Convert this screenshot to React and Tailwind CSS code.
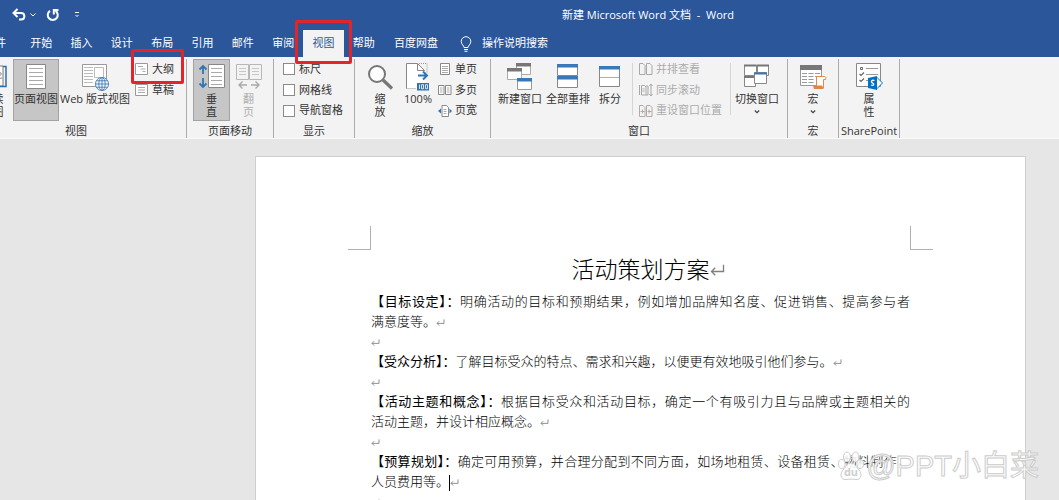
import React from 'react'

const tabs = ['开始', '插入', '设计', '布局', '引用', '邮件', '审阅', '视图', '帮助']

const paragraphs = [
  {
    heading: '【目标设定】：',
    lines: ['明确活动的目标和预期结果，例如增加品牌知名度、促进销售、提高参与者', '满意度等。'],
  },
  { heading: '【受众分析】：', lines: ['了解目标受众的特点、需求和兴趣，以便更有效地吸引他们参与。'] },
  {
    heading: '【活动主题和概念】：',
    lines: ['根据目标受众和活动目标，确定一个有吸引力且与品牌或主题相关的', '活动主题，并设计相应概念。'],
  },
  {
    heading: '【预算规划】：',
    lines: ['确定可用预算，并合理分配到不同方面，如场地租赁、设备租赁、物料制作，', '人员费用等。'],
    cursor: true,
  },
]

/* ---------- large icons, 28 x 28 ---------- */

const BigIcon = ({ children }) => (
  <svg width="28" height="28" viewBox="0 0 28 28" fill="none" className="shrink-0">
    {children}
  </svg>
)

const ReadIcon = () => (
  <BigIcon>
    <path d="M2 3h22v20H2z" fill="#fff" stroke="#777" />
    <path d="M24 3.5h3v20h-8" stroke="#2f6eb0" strokeWidth="1.5" />
    <path d="M19 9c4 0 4 3 1 4s-1 3 3 2M5 8h8M5 12h8M5 16h8" stroke="#777" />
  </BigIcon>
)

const PageIcon = () => (
  <BigIcon>
    <path d="M4.500 1.500h19v24h-19z" fill="#fff" stroke="#888" />
    <path d="M7 5.500h14M7 9.500h14M7 13.500h14M7 17.500h14M7 21.500h14" stroke="#aaa" />
  </BigIcon>
)

const WebIcon = () => (
  <BigIcon>
    <path d="M1.500 1.500h24v22h-24z" fill="#fff" stroke="#999" />
    <path d="M3 4.500h9M3 7.500h9M3 10.500h9M3 13.500h9M3 16.500h9M3 19.500h9" stroke="#bbb" />
    <path d="M13.500 4.500h9v10h-9z" stroke="#bbb" />
    <circle cx="21" cy="21" r="6.500" fill="#fff" stroke="#4a82b8" />
    <path d="M14.500 21h13M21 14.500v13M15.500 17.800h11M15.500 24.200h11" stroke="#4a82b8" />
    <ellipse cx="21" cy="21" rx="3.200" ry="6.500" stroke="#4a82b8" />
  </BigIcon>
)

const VerticalIcon = () => (
  <BigIcon>
    <path d="M10.500 1.500h16v23h-16z" fill="#fff" stroke="#888" />
    <path d="M13 5.500h11M13 9.500h11M13 13.500h11M13 17.500h11M13 21.500h11" stroke="#aaa" />
    <path d="M5 3v8M1.500 6.500L5 3l3.500 3.500M5 15v9M1.500 20.500L5 24l3.500-3.500" stroke="#2f75b5" strokeWidth="1.800" />
  </BigIcon>
)

const FlipIcon = () => (
  <BigIcon>
    <path d="M1.500 1.500h12v15h-12zM14.500 1.500h12v15h-12z" stroke="#b8b8b8" />
    <path d="M4 5.500h7M4 8.500h7M4 11.500h7M17 5.500h7M17 8.500h7M17 11.500h7" stroke="#c8c8c8" />
    <path d="M12 22H4M7.500 18.500L4 22l3.500 3.500M16 22h8M20.500 18.500L24 22l-3.500 3.500" stroke="#aaa" strokeWidth="1.400" />
  </BigIcon>
)

const ZoomIcon = () => (
  <BigIcon>
    <circle cx="11" cy="11" r="8" fill="#fff" stroke="#777" strokeWidth="2" />
    <path d="M17 17l9 8.500" stroke="#777" strokeWidth="3.200" />
  </BigIcon>
)

const HundredIcon = () => (
  <BigIcon>
    <path d="M2.500 25.500v-25h11l7 7v18z" fill="#fff" />
    <path d="M2.500 25.500v-25h11l7 7" stroke="#888" />
    <path d="M13.500.500v7h7" stroke="#888" />
    <path d="M2.500 25.500h10M15 .500h8v10" stroke="#999" strokeDasharray="1 1" />
    <path d="M14 12.500h8M19 8.500l4 4-4 4" stroke="#2f75b5" strokeWidth="2" />
    <path d="M13 20h12v7.500H13z" fill="#2f75b5" />
    <path d="M15.500 21.500v4.500M17.500 21.700h2v4h-2zM21.500 21.700h2v4h-2z" stroke="#fff" strokeWidth=".800" />
  </BigIcon>
)

const NewWindowIcon = () => (
  <BigIcon>
    <path d="M10.500.500h14v11h-14z" fill="#fff" stroke="#aaa" />
    <path d="M10 0h15v3.500H10z" fill="#777" />
    <path d="M1.500 5.500h14v11h-14z" fill="#fff" stroke="#aaa" />
    <path d="M1 5h15v3.500H1z" fill="#777" />
    <path d="M11.500 15.500h14v11h-14z" fill="#fff" stroke="#999" />
    <path d="M11 15h15v3.500H11z" fill="#3a78b8" />
  </BigIcon>
)

const ArrangeIcon = () => (
  <BigIcon>
    <path d="M3.500 1.500h20v11h-20zM3.500 13.500h20v11h-20z" fill="#fff" stroke="#888" />
    <path d="M3 1h21v3.500H3zM3 13h21v3.500H3z" fill="#3a78b8" />
  </BigIcon>
)

const SplitIcon = () => (
  <BigIcon>
    <path d="M3.500 3.500h20v20h-20z" fill="#fff" stroke="#888" />
    <path d="M3 3h21v3.500H3z" fill="#3a78b8" />
    <path d="M4 14.500h19" stroke="#8db4da" />
  </BigIcon>
)

const SwitchIcon = () => (
  <BigIcon>
    <path d="M1.500 2.500h12v10h-12zM14.500 2.500h11v10h-11zM1.500 13.500h11v10h-11z" fill="#fff" stroke="#888" />
    <path d="M1 2.500h12.500M14 2.500h12M1 14h12" stroke="#777" strokeWidth="2" />
    <path d="M11.500 9.500h12v11h-12z" fill="#fff" stroke="#888" />
    <path d="M11 10.500h13" stroke="#3a78b8" strokeWidth="2" />
  </BigIcon>
)

const MacroIcon = () => (
  <BigIcon>
    <path d="M1.500 3.500h21v19h-21z" fill="#fff" stroke="#999" />
    <path d="M1 2h22v5H1z" fill="#777" />
    <path d="M3 10.500h18M3 13.500h18M3 16.500h12M3 19.500h12" stroke="#999" strokeDasharray="5 1.500" />
    <path d="M17.500 13.500h8c1 0 2 1 1 3h-2v8.500h-9v-2h2z" fill="#fff" stroke="#dd8a4e" />
    <path d="M14 22.500h9l1.500 3.500h-9.500z" fill="#e08545" />
  </BigIcon>
)

const PropertiesIcon = () => (
  <BigIcon>
    <path d="M1.500.500h24v23h-24z" fill="#fff" stroke="#888" />
    <path d="M11 5.500h12M11 11.500h12M11 17.500h4" stroke="#999" />
    <path d="M5.500 4.500h2v2h-2z" stroke="#666" />
    <path d="M4.500 11l1.500 1.500L9 9.500M4.500 17l1.500 1.500L9 15.500" stroke="#666" strokeWidth="1.200" />
    <path d="M22 14.500l5.500 5.500-5.500 5.500-3-5.500z" fill="#fff" stroke="#0072c6" />
    <path d="M13 15l9-2v14l-9-2z" fill="#0072c6" />
    <path d="M19.500 17.500c-3-1-4 1.500-2 2.500s1.500 3-1.500 2" stroke="#fff" strokeWidth="1.300" />
  </BigIcon>
)

/* ---------- small icons, 14 x 14 ---------- */

const SmallIcon = ({ children }) => (
  <svg width="14" height="14" viewBox="0 0 14 14" fill="none" className="shrink-0">
    {children}
  </svg>
)

const OutlineIcon = () => (
  <SmallIcon>
    <path d="M.500 1.500h12v11H.500z" fill="#fff" stroke="#999" />
    <path d="M3 4.500h5M5.500 7h5M7.500 9.500h3" stroke="#aaa" />
  </SmallIcon>
)

const DraftIcon = () => (
  <SmallIcon>
    <path d="M.500 1.500h12v11H.500z" fill="#fff" stroke="#999" />
    <path d="M3 4.500h7M3 7h7M3 9.500h7" stroke="#aaa" />
  </SmallIcon>
)

const OnePageIcon = () => (
  <SmallIcon>
    <path d="M2.500 1.500h9v11h-9z" fill="#fff" stroke="#888" />
    <path d="M4 4.500h6M4 6.500h6M4 8.500h6M4 10.500h6" stroke="#aaa" />
  </SmallIcon>
)

const MultiPageIcon = () => (
  <SmallIcon>
    <path d="M.500 2.500h5.500v9H.500zM7.500 2.500h5.500v9H7.500z" fill="#fff" stroke="#888" />
    <path d="M2 5h2.500M2 7h2.500M2 9h2.500M9 5h2.500M9 7h2.500M9 9h2.500" stroke="#aaa" />
  </SmallIcon>
)

const PageWidthIcon = () => (
  <SmallIcon>
    <path d="M4 1.500h4.500l2 2v9H4z" fill="#fff" stroke="#888" />
    <path d="M5.500 5.500h3M5.500 7.500h3M5.500 9.500h3" stroke="#aaa" />
    <path d="M3 4.500v5L0 7zM11.500 4.500v5l2.500-2.500z" fill="#2f75b5" />
  </SmallIcon>
)

const SideBySideIcon = () => (
  <SmallIcon>
    <path d="M.500 1.500H4l2 2v9H.500zM7.500 1.500H11l2 2v9H7.500z" stroke="#a8a8a8" />
  </SmallIcon>
)

const SyncIcon = () => (
  <SmallIcon>
    <path d="M.500 2v10M2.500 2.500h3l1.500 1.500v8H2.500zM7 3h2v9H7" stroke="#a8a8a8" />
    <path d="M12 1v12M10.500 3L12 1l1.500 2M10.500 11l1.500 2 1.500-2M3.500 6h2M3.500 8h2" stroke="#a8a8a8" />
  </SmallIcon>
)

const ResetIcon = () => (
  <SmallIcon>
    <path d="M.500 1.500H4l2 2v9H.500zM7.500 1.500H11l2 2v9H7.500z" stroke="#b5a8a8" />
    <path d="M1.500 7.500h4M3.500 5.500v4M8.500 7.500h4M10 5.500v4" stroke="#b5a8a8" />
  </SmallIcon>
)

const Chevron = () => (
  <svg width="6" height="13" viewBox="0 0 6 13" fill="none">
    <path d="M.800 5.500L3 7.700l2.200-2.200" stroke="#444" strokeWidth="1.200" />
  </svg>
)

const ReturnMark = ({ large }) => (
  <svg
    viewBox="0 0 10 8"
    fill="none"
    stroke="#808080"
    strokeWidth={large ? '.900' : '1'}
    className={large ? 'w-[15px] h-3' : 'inline-block w-[9px] h-[7px]'}
  >
    <path d="M9 .500v4.500H1M3.500 2.500L1 5l2.500 2.500" />
  </svg>
)

/* ---------- ribbon parts ---------- */

const RedFrame = ({ className }) => (
  <span className={`absolute z-10 rounded-xs border-3 border-[#e0262a] pointer-events-none ${className}`}></span>
)

const Group = ({ label, className, children }) => (
  <section className={`flex flex-col shrink-0 border-r border-[#ababab] ${className}`}>
    <div className="flex h-[62px] shrink-0">{children}</div>
    <h2 className="mt-[3px] text-center leading-[14px]">{label}</h2>
  </section>
)

const BigButton = ({ icon, lines, className, pressed, disabled, menu }) => (
  <button
    disabled={disabled}
    className={`flex flex-col items-center shrink-0 border pt-[3px] leading-[13px] whitespace-nowrap ${
      pressed ? 'bg-[#c6c6c6] border-[#a3a3a3]' : 'border-transparent'
    } ${disabled ? 'text-[#b0b0b0]' : ''} ${className}`}
  >
    {icon}
    <span className="mt-px">{lines[0]}</span>
    {lines[1] && <span>{lines[1]}</span>}
    {menu && <Chevron />}
  </button>
)

const SmallButton = ({ icon, label, disabled, children }) => (
  <button
    disabled={disabled}
    className={`relative flex flex-1 items-center gap-[3px] whitespace-nowrap ${disabled ? 'text-[#ababab]' : ''}`}
  >
    {icon}
    {label}
    {children}
  </button>
)

const Check = ({ label }) => (
  <label className="flex flex-1 items-center gap-1">
    <input type="checkbox" className="appearance-none size-3 border border-[#8a8a8a] bg-white" />
    {label}
  </label>
)

const Divider = () => <div className="w-px h-[52px] mt-1 bg-[#d5d5d5]"></div>

const TitleBar = () => (
  <div className="flex h-[30px] items-center">
    <div className="flex w-[237px] shrink-0 items-center pl-3">
      <button aria-label="撤消">
        <svg width="14" height="14" viewBox="0 0 14 14" fill="none" stroke="#fff" strokeWidth="2">
          <path d="M5.500 1L1.500 5l4 4M1.500 5H9c4.500 0 4.500 6.500 0 6.500H7" />
        </svg>
      </button>
      <button aria-label="撤消选项" className="ml-1">
        <svg width="6" height="6" viewBox="0 0 6 6" fill="none" stroke="#fff">
          <path d="M.500 1.500L3 4l2.500-2.500" />
        </svg>
      </button>
      <button aria-label="重复" className="ml-2.5">
        <svg width="14" height="14" viewBox="0 0 14 14" fill="none" stroke="#fff" strokeWidth="2">
          <path d="M4 2.800A5 5 0 1 0 9.500 2.800M7.800 6.500V2H12.500" />
        </svg>
      </button>
      <button aria-label="自定义快速访问工具栏" className="ml-3.5">
        <svg width="6" height="6" viewBox="0 0 6 6" fill="none" stroke="#fff">
          <path d="M1 .500h4M1.500 3l1.500 1.500L4.500 3" />
        </svg>
      </button>
    </div>
    <h1 className="flex-1 text-center text-white whitespace-pre">新建 Microsoft Word 文档  -  Word</h1>
  </div>
)

const TabBar = () => (
  <nav className="flex h-[27px] items-stretch text-white whitespace-nowrap">
    <button className="-ml-4 w-[37px] shrink-0 text-left">文件</button>
    <div className="grid grid-cols-9 w-[363px] shrink-0">
      {tabs.map((tab) =>
        tab === '视图' ? (
          <button key={tab} className="relative bg-[#f3f3f3] text-[#2b579a]">
            {tab}
            <RedFrame className="-left-2 -right-2 -top-2.5 -bottom-[7px]" />
          </button>
        ) : (
          <button key={tab}>{tab}</button>
        )
      )}
    </div>
    <button className="px-2.5">百度网盘</button>
    <button className="flex items-center gap-2.5 pl-3">
      <svg width="12" height="16" viewBox="0 0 12 16" fill="none" stroke="#fff">
        <path d="M4 11.500c0-2-2.800-3-2.800-6a4.800 4.800 0 0 1 9.600 0c0 3-2.800 4-2.800 6zM4 13.500h4M4.500 15.300h3" />
      </svg>
      操作说明搜索
    </button>
  </nav>
)

const Ribbon = () => (
  <div className="flex h-[82px] shrink-0 border-b border-[#fafafa] bg-[#f3f3f3] pt-0.5 text-[#333]">
    <Group label="视图" className="-ml-[34px] w-[221px]">
      <BigButton icon={<ReadIcon />} lines={['阅读', '视图']} className="ml-1.5 w-[41px]" />
      <BigButton icon={<PageIcon />} lines={['页面视图']} className="w-[46px]" pressed />
      <BigButton icon={<WebIcon />} lines={['Web 版式视图']} className="w-[72px]" />
      <div className="flex flex-col pl-1">
        <SmallButton icon={<OutlineIcon />} label="大纲">
          <RedFrame className="-left-1 -right-2.5 -top-2.5 -bottom-1" />
        </SmallButton>
        <SmallButton icon={<DraftIcon />} label="草稿" />
        <div className="flex-1"></div>
      </div>
    </Group>

    <Group label="页面移动" className="w-[87px] px-1.5">
      <BigButton icon={<VerticalIcon />} lines={['垂', '直']} className="w-[37px]" pressed />
      <BigButton icon={<FlipIcon />} lines={['翻', '页']} className="w-[37px]" disabled />
    </Group>

    <Group label="显示" className="w-[81px]">
      <div className="flex flex-col pl-[9px]">
        <Check label="标尺" />
        <Check label="网格线" />
        <Check label="导航窗格" />
      </div>
    </Group>

    <Group label="缩放" className="w-[136px]">
      <BigButton icon={<ZoomIcon />} lines={['缩', '放']} className="ml-[7px] w-9" />
      <BigButton icon={<HundredIcon />} lines={['100%']} className="w-10" />
      <div className="flex flex-col">
        <SmallButton icon={<OnePageIcon />} label="单页" />
        <SmallButton icon={<MultiPageIcon />} label="多页" />
        <SmallButton icon={<PageWidthIcon />} label="页宽" />
      </div>
    </Group>

    <Group label="窗口" className="w-[297px]">
      <BigButton icon={<NewWindowIcon />} lines={['新建窗口']} className="ml-[5px] w-12" />
      <BigButton icon={<ArrangeIcon />} lines={['全部重排']} className="w-12" />
      <BigButton icon={<SplitIcon />} lines={['拆分']} className="mr-1 w-9" />
      <Divider />
      <div className="flex flex-col pl-1.5 pr-2">
        <SmallButton icon={<SideBySideIcon />} label="并排查看" disabled />
        <SmallButton icon={<SyncIcon />} label="同步滚动" disabled />
        <SmallButton icon={<ResetIcon />} label="重设窗口位置" disabled />
      </div>
      <Divider />
      <BigButton icon={<SwitchIcon />} lines={['切换窗口']} className="w-[52px]" menu />
    </Group>

    <Group label="宏" className="w-[51px]">
      <BigButton icon={<MacroIcon />} lines={['宏']} className="w-[50px]" menu />
    </Group>

    <Group label="SharePoint" className="w-[61px]">
      <BigButton icon={<PropertiesIcon />} lines={['属', '性']} className="w-[60px]" />
    </Group>
  </div>
)

/* ---------- document ---------- */

const Paragraph = ({ heading, lines, cursor }) => (
  <>
    <p>
      {lines.map((line, i) => {
        const last = i === lines.length - 1
        return (
          <span key={i} className={`block whitespace-nowrap ${last ? '' : '[text-align-last:justify]'}`}>
            {i === 0 && <b>{heading}</b>}
            {line}
            {last && cursor && <span className="inline-block w-px h-4 bg-black align-middle"></span>}
            {last && <ReturnMark />}
          </span>
        )
      })}
    </p>
    <p>
      <ReturnMark />
    </p>
  </>
)

const Document = () => (
  <main className="flex-1 overflow-hidden bg-[#e6e6e6] pt-[17px]">
    <article className="ml-[255px] mr-[33px] min-h-full border border-[#cfcfcf] bg-white pt-[69px] text-black">
      <div className="flex justify-between px-[92px]">
        <div className="w-[23px] h-6 border-r border-b border-[#b0b0b0]"></div>
        <div className="w-[23px] h-6 border-l border-b border-[#b0b0b0]"></div>
      </div>
      <h2 className="flex justify-center text-[23px] leading-[38px] font-light">
        <span className="relative">
          活动策划方案
          <span className="absolute left-full top-3.5">
            <ReturnMark large />
          </span>
        </span>
      </h2>
      <div className="px-[115px] pt-[3px] text-[13px] leading-[20px] font-light">
        {paragraphs.map((p) => (
          <Paragraph key={p.heading} {...p} />
        ))}
      </div>
    </article>
  </main>
)

const Watermark = () => (
  <div className="absolute right-5 bottom-[18px] flex items-center gap-0.5 pointer-events-none">
    <svg width="26" height="30" viewBox="0 0 26 30" fill="#fff" fillOpacity=".85" stroke="#ccc">
      <ellipse cx="9" cy="6" rx="3.500" ry="5" />
      <ellipse cx="17.500" cy="6" rx="3.500" ry="5" />
      <ellipse cx="3.800" cy="13" rx="3.300" ry="4.500" />
      <ellipse cx="22.200" cy="13" rx="3.300" ry="4.500" />
      <path d="M13 12c4 0 5 4 8 7s3 10-3 9.500c-3-.500-7-.500-10 0-6 .500-6-6.500-3-9.500s4-7 8-7z" />
      <text x="13" y="25" textAnchor="middle" fontSize="11" fontWeight="bold" fill="#c4c4c4" stroke="none">
        du
      </text>
    </svg>
    <span className="text-[29px] leading-[32px] font-['Liberation_Sans','Noto_Sans_CJK_SC',sans-serif] text-white/85 [-webkit-text-stroke:1px_#cccccc]">
      @PPT小白菜
    </span>
  </div>
)

export default function App() {
  return (
    <div className="relative flex h-screen flex-col overflow-hidden text-[11px] font-['Open_Sans','Noto_Sans_CJK_SC',sans-serif]">
      <header className="shrink-0 bg-[#2b579a]">
        <TitleBar />
        <TabBar />
      </header>
      <Ribbon />
      <Document />
      <Watermark />
    </div>
  )
}
